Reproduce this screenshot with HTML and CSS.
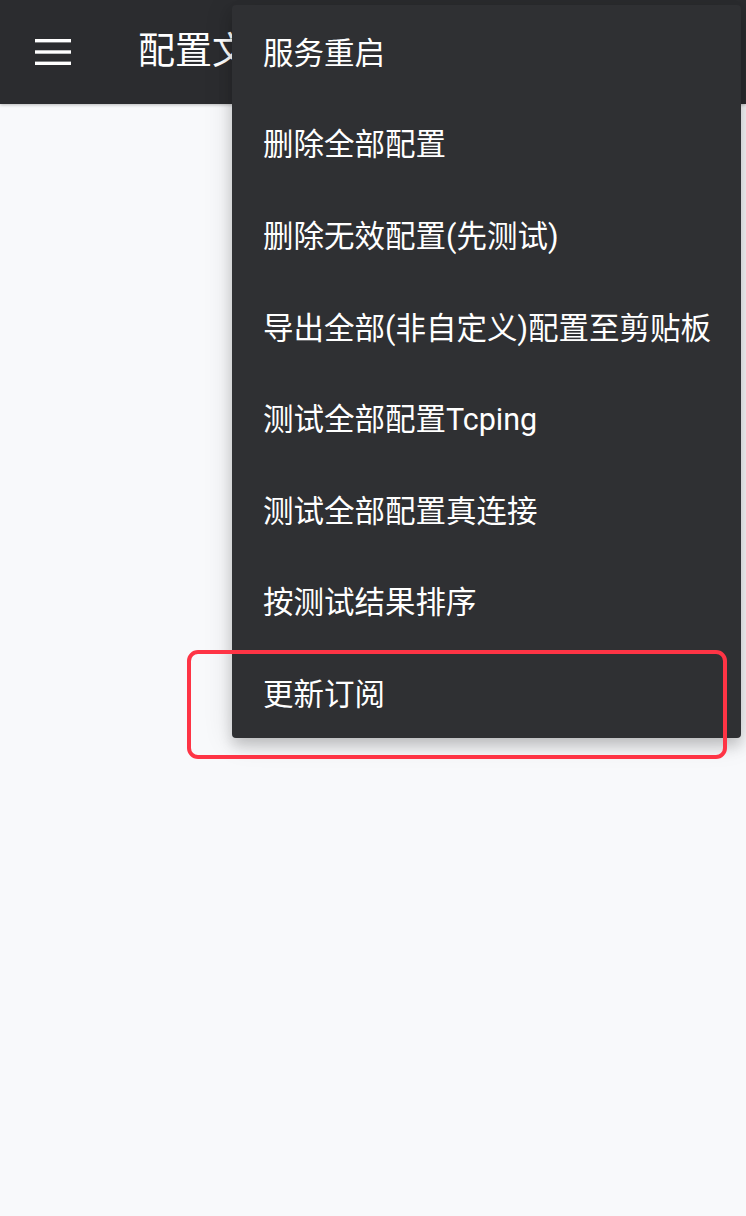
FILE: index.html
```html
<!DOCTYPE html>
<html lang="zh-CN">
<head>
<meta charset="utf-8">
<link rel="stylesheet" href="styles.css">
</head>
<body>
<header class="appbar">
  <button class="nav-btn" aria-label="menu">
    <svg width="36" height="26" viewBox="0 0 36 26"><rect x="0" y="0" width="36" height="3.4" fill="#fff"/><rect x="0" y="11.3" width="36" height="3.4" fill="#fff"/><rect x="0" y="22.6" width="36" height="3.4" fill="#fff"/></svg>
  </button>
  <h1 class="title">配置文件</h1>
</header>
<main class="content"></main>
<ul class="menu">
  <li class="item">服务重启</li>
  <li class="item">删除全部配置</li>
  <li class="item">删除无效配置(先测试)</li>
  <li class="item">导出全部(非自定义)配置至剪贴板</li>
  <li class="item">测试全部配置Tcping</li>
  <li class="item">测试全部配置真连接</li>
  <li class="item">按测试结果排序</li>
  <li class="item">更新订阅</li>
</ul>
<div class="highlight"></div>
</body>
</html>
```
FILE: styles.css
```css
html, body {
  margin: 0;
  padding: 0;
  height: 100%;
}
body {
  background: #f8f9fb;
  font-family: Roboto, "Noto Sans CJK SC", sans-serif;
  overflow: hidden;
}
.appbar {
  height: 104px;
  background: #2b2c2f;
  display: flex;
  align-items: center;
  box-shadow: 0 1px 3px rgba(0,0,0,0.25);
}
.nav-btn {
  background: none;
  border: 0;
  padding: 0;
  margin-left: 35px;
  width: 36px;
  height: 26px;
  display: flex;
}
.title {
  margin: 0 0 0 67px;
  width: 94px;
  overflow: hidden;
  white-space: nowrap;
  color: #fff;
  font-size: 37px;
  font-weight: 400;
  line-height: 1.2;
}
.menu {
  position: absolute;
  top: 5px;
  left: 232px;
  width: 509px;
  margin: 0;
  padding: 0;
  list-style: none;
  background: #2f3033;
  border-radius: 4px;
  box-shadow: 0 8px 14px rgba(0,0,0,0.18), 0 3px 30px rgba(0,0,0,0.12);
}
.item {
  height: 91.6px;
  display: flex;
  align-items: center;
  padding-left: 31px;
  color: #fff;
  font-size: 30.5px;
  white-space: nowrap;
}
.highlight {
  position: absolute;
  left: 187px;
  top: 650px;
  width: 532px;
  height: 101px;
  border: 4px solid #fe3445;
  border-radius: 11px;
}
```
